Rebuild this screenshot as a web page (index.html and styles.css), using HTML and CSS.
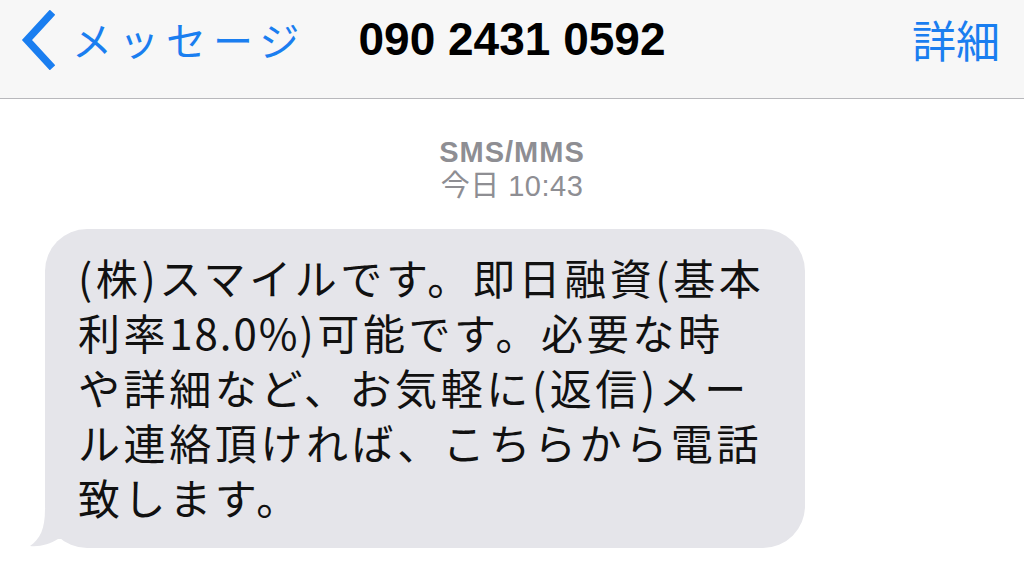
FILE: index.html
```html
<!DOCTYPE html>
<html lang="ja">
<head>
    <meta charset="UTF-8">
    <meta name="viewport" content="width=device-width, initial-scale=1.0">
    <title>メッセージ</title>
    <link rel="stylesheet" href="styles.css">
</head>
<body>

    <div id="navbar">
        <a class="back" href="#">
            <svg class="chevron" width="36" height="60" viewBox="0 0 36 60">
                <path d="M31 5 L8 30 L31 55" fill="none" stroke="#1a7ef0" stroke-width="7.5" stroke-linecap="square"/>
            </svg>
            <span class="back-label">メッセージ</span>
        </a>
        <div class="title">090 2431 0592</div>
        <a class="details" href="#">詳細</a>
    </div>

    <div id="thread">
        <div class="meta">
            <div class="service">SMS/MMS</div>
            <div class="time">今日 10:43</div>
        </div>

        <div class="bubble">
            <svg class="tail" width="40" height="40" viewBox="0 0 40 40">
                <path d="M15 0 C15 20 10 30 0 37 C10 38 20 35 28 30 L40 30 L40 0 Z" fill="#e5e5ea"/>
            </svg>
            <p class="text">(株)スマイルです。即日融資(基本<br>利率<span class="num">18.0%</span>)可能です。必要な時<br>や詳細など、お気軽に(返信)メー<br>ル連絡頂ければ、こちらから電話<br>致します。</p>
        </div>
    </div>

</body>
</html>
```

FILE: styles.css
```css
body {
    margin: 0;
    background-color: #fff;
    font-family: "Liberation Sans", "Noto Sans CJK JP", sans-serif;
    overflow: hidden;
}

#navbar {
    height: 78px;
    padding-bottom: 20px;
    background-color: #f7f7f7;
    border-bottom: 1px solid #b8b8bc;
    display: grid;
    grid-template-columns: 1fr auto 1fr;
    align-items: center;
}

.back {
    display: flex;
    align-items: center;
    gap: 17px;
    padding-left: 19px;
    color: #1a7ef0;
    text-decoration: none;
}

.chevron {
    margin-top: 1px;
}

.back-label {
    font-family: "Noto Sans CJK JP", sans-serif;
    font-size: 40px;
    font-weight: 400;
    letter-spacing: 7px;
}

.title {
    font-size: 46px;
    font-weight: bold;
    color: #000;
}

.details {
    justify-self: end;
    padding-right: 24px;
    font-family: "Noto Sans CJK JP", sans-serif;
    font-size: 44px;
    font-weight: 400;
    color: #1a7ef0;
    text-decoration: none;
}

#thread {
    padding: 36px 0 0 45px;
}

.meta {
    text-align: center;
    color: #8e8e93;
    margin-left: -45px;
    font-size: 29px;
}

.service {
    font-weight: bold;
    line-height: 34px;
    letter-spacing: 1px;
}

.time {
    line-height: 34px;
    letter-spacing: 0.5px;
}

.bubble {
    position: relative;
    width: 760px;
    box-sizing: border-box;
    margin-top: 26px;
    padding: 20px 0 24px 33px;
    background-color: #e5e5ea;
    border-radius: 42px;
}

.tail {
    position: absolute;
    left: -15px;
    bottom: -1px;
}

.text {
    margin: 0;
    font-family: "Noto Sans CJK JP", sans-serif;
    font-size: 42px;
    line-height: 55px;
    letter-spacing: 3.6px;
    color: #111;
    white-space: nowrap;
}

.num {
    letter-spacing: 2px;
}
```
